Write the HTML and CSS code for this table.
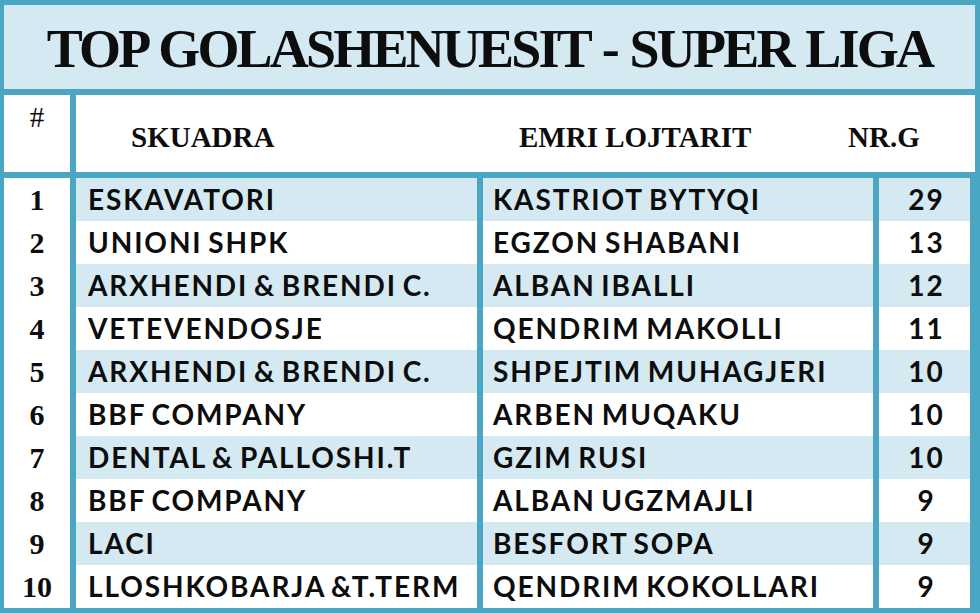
FILE: index.html
```html
<!DOCTYPE html>
<html lang="sq">
<head>
<meta charset="utf-8">
<title>Top Golashenuesit - Super Liga</title>
<link rel="stylesheet" href="styles.css">
</head>
<body>
<div class="board">
  <div class="title">TOP GOLASHENUESIT - SUPER LIGA</div>
  <div class="head">
    <div class="head-num">#</div>
    <div class="head-labels">
      <span>SKUADRA</span>
      <span>EMRI LOJTARIT</span>
      <span>NR.G</span>
    </div>
  </div>
  <div class="rows">
    <div class="num">1</div><div class="cell team alt">ESKAVATORI</div><div class="cell player alt">KASTRIOT BYTYQI</div><div class="cell goals alt">29</div>
    <div class="num">2</div><div class="cell team">UNIONI SHPK</div><div class="cell player">EGZON SHABANI</div><div class="cell goals">13</div>
    <div class="num">3</div><div class="cell team alt">ARXHENDI &amp; BRENDI C.</div><div class="cell player alt">ALBAN IBALLI</div><div class="cell goals alt">12</div>
    <div class="num">4</div><div class="cell team">VETEVENDOSJE</div><div class="cell player">QENDRIM MAKOLLI</div><div class="cell goals">11</div>
    <div class="num">5</div><div class="cell team alt">ARXHENDI &amp; BRENDI C.</div><div class="cell player alt">SHPEJTIM MUHAGJERI</div><div class="cell goals alt">10</div>
    <div class="num">6</div><div class="cell team">BBF COMPANY</div><div class="cell player">ARBEN MUQAKU</div><div class="cell goals">10</div>
    <div class="num">7</div><div class="cell team alt">DENTAL &amp; PALLOSHI.T</div><div class="cell player alt">GZIM RUSI</div><div class="cell goals alt">10</div>
    <div class="num">8</div><div class="cell team">BBF COMPANY</div><div class="cell player">ALBAN UGZMAJLI</div><div class="cell goals">9</div>
    <div class="num">9</div><div class="cell team alt">LACI</div><div class="cell player alt">BESFORT SOPA</div><div class="cell goals alt">9</div>
    <div class="num">10</div><div class="cell team">LLOSHKOBARJA &amp;T.TERM</div><div class="cell player">QENDRIM KOKOLLARI</div><div class="cell goals">9</div>
  </div>
</div>
</body>
</html>
```
FILE: styles.css
```css
html, body {
  margin: 0;
  padding: 0;
  background: #4ba6c4;
}

.board {
  width: 980px;
  height: 613px;
  box-sizing: border-box;
  background: #4ba6c4;
  padding: 5px 5px 5px 4px;
  display: flex;
  flex-direction: column;
  color: #0d0d0d;
}

.title {
  height: 84px;
  background: #d4e9f1;
  font-family: "Liberation Serif", "Times New Roman", serif;
  font-weight: bold;
  font-size: 54px;
  letter-spacing: -2.8px;
  word-spacing: 2px;
  line-height: 84px;
  padding-top: 2px;
  box-sizing: border-box;
  text-align: center;
  white-space: nowrap;
}

.head {
  margin-top: 6px;
  height: 77px;
  display: flex;
  gap: 6px;
  font-family: "Liberation Serif", "Times New Roman", serif;
  font-weight: bold;
  font-size: 29px;
  line-height: 30px;
}

.head-num {
  width: 66px;
  background: #fff;
  text-align: center;
  padding-top: 7px;
  box-sizing: border-box;
  font-weight: normal;
}

.head-labels {
  flex: 1;
  background: #fff;
  display: grid;
  grid-template-columns: 388px 329px 1fr;
  padding: 27px 0 0 55px;
  box-sizing: border-box;
}

.rows {
  margin-top: 6px;
  margin-right: 5px;
  display: grid;
  grid-template-columns: 66px 401px 390px 91px;
  grid-auto-rows: 43px;
  column-gap: 6px;
}

.num {
  background: #fff;
  text-align: center;
  font-family: "Liberation Serif", "Times New Roman", serif;
  font-weight: bold;
  font-size: 30px;
  line-height: 43px;
}

.cell {
  background: #fff;
  font-family: Lato, "Open Sans", sans-serif;
  font-weight: 700;
  font-size: 28px;
  line-height: 43px;
  letter-spacing: 1.9px;
  word-spacing: -3px;
  white-space: nowrap;
}

.cell.alt {
  background: #d4e9f1;
}

.team {
  padding-left: 12px;
}

.player {
  padding-left: 10px;
}

.goals {
  text-align: center;
  padding-left: 4px;
  letter-spacing: 2px;
}
```
